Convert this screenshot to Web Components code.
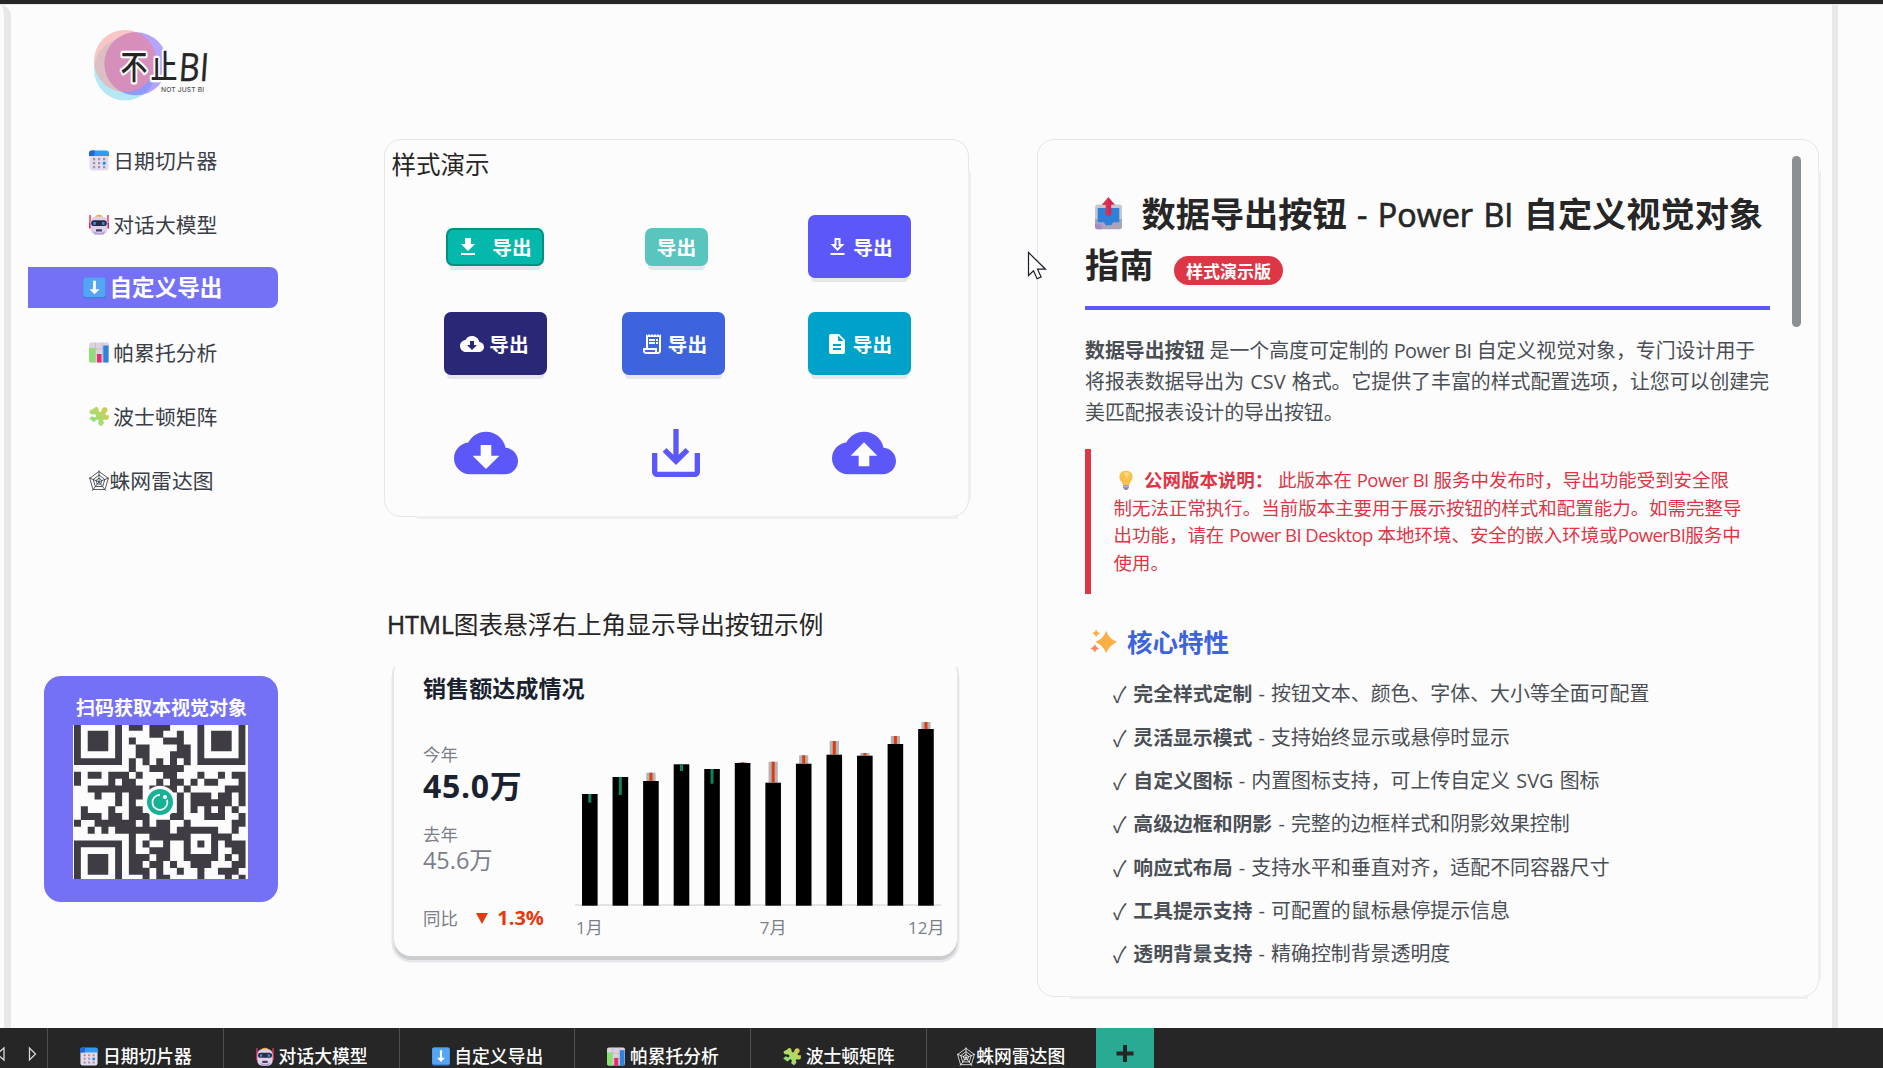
<!DOCTYPE html>
<html lang="zh-CN">
<head>
<meta charset="utf-8">
<title>自定义导出</title>
<style>
html,body{margin:0;height:100%;background:#262626;overflow:hidden}
body{font-family:"Open Sans","Noto Sans CJK SC",sans-serif;color:#262626}
</style>
</head>
<body>
<report-app></report-app>
<script>
const define=(name,html,setup)=>customElements.define(name,class extends HTMLElement{
  connectedCallback(){
    if(this.shadowRoot)return;
    const root=this.attachShadow({mode:'open'});
    root.innerHTML=typeof html==='function'?html(this):html;
    if(setup)setup(this,root);
  }
});

/* colour pictograms, 20x21 box */
const EMOJI={
calendar:`<rect x=".5" y="2" width="19" height="18.5" rx="2.5" fill="#e4dcee"/><path d="M0 6V3.2Q0 .5 2.7.5H17.3Q20 .5 20 3.2V6z" fill="#2f9bf6"/><path d="M0 6V3.2Q0 .5 2.7.5H6L5 6z" fill="#2463d8"/><g fill="#9d96a6"><path d="M4 8h2.2v2.2H4zM9 8h2.2v2.2H9zM14 8h2.2v2.2H14zM4 12h2.2v2.2H4zM9 12h2.2v2.2H9zM4 16h2.2v2.2H4zM9 16h2.2v2.2H9zM14 16h2.2v2.2H14z"/></g><rect x="13.8" y="11.8" width="2.8" height="2.8" fill="#1f86f0"/>`,
robot:`<path d="M.3 1h1.5v13H.3zM18.2 1h1.5v13h-1.5z" fill="#e5355e"/><path d="M0 9h2.500v5.500H0zM17.500 9H20v5.500h-2.500z" fill="#c42a68"/><path d="M6 3.5Q6.500.8 10 .8t4 2.7z" fill="#f4a825"/><rect x="1.5" y="2.500" width="17" height="18.2" rx="5.5" fill="#e0d0e8"/><path d="M4 17q6 4 12.500 0l-2 3.500H6z" fill="#b79be0"/><rect x="2.2" y="6.300" width="15.600" height="5.700" rx="2.800" fill="#2c2b45"/><path d="M4.300 8h2.600v2.700H4.300zM13 8h2.600v2.700H13z" fill="#2196f3"/><rect x="7" y="15.300" width="6" height="2.300" rx=".5" fill="#46405a"/>`,
down:`<rect x="0" y=".5" width="20" height="20" rx="2.200" fill="#3e7fd9"/><rect x=".3" y=".5" width="19.200" height="18.500" rx="2" fill="#55a5f5"/><path d="M8.800 3.500h2.400v8.300h3.200L10 16.500 5.600 11.800h3.200z" fill="#fff"/>`,
bars:`<rect x="0" y=".5" width="20" height="20" rx="2" fill="#dcd3e0"/><path d="M6.500.5v20M13.500.5v20M0 7h20M0 13h20" stroke="#c3b8ca" stroke-width=".8"/><path d="M0 6h6v14.500H2q-2 0-2-2z" fill="#8be070"/><path d="M8 12h4.500v8.500H8z" fill="#e92b6c"/><path d="M14.300 3.500h5.200v17h-5.200z" fill="#2b83dd"/>`,
puzzle:`<defs><linearGradient id="g" x1="1" y1="0" x2="0" y2="1"><stop offset="0" stop-color="#dcc445"/><stop offset=".55" stop-color="#a9dc6b"/><stop offset="1" stop-color="#6fe289"/></linearGradient></defs><path fill="url(#g)" d="M4.800 2.500 7 .8q2.800.6 2.500 3-.3 1.600 1.200 2.200 1.500 0 1.900-1.500.2-2.900 2.900-3.200 3.200.2 3 3.100-.2 1.800-1.900 2.500-1 1.100.3 2.200 1.600.4 2.600-.6l.5 3q-.6 3-3.200 2.300-1.800-.7-2.600.3-.5 1.500 1 2.700l-2.800 3.500-3-2q-.7-1 .3-2.400.6-2-1.300-2.400-1.800.2-2.200 1.800l-1.500.7L.3 12.600l2.200-2q1.500-.6 2.500.6 1.900.6 2.200-1.200 0-1.500-1.700-1.700Q1.200 8.800.6 6.400.3 4 3 3.500q1 0 1.800-1z"/>`,
web:`<g fill="none" stroke="currentColor" stroke-width=".85"><path d="M10 1.500 19.300 8.300 16 19.500H4L.7 8.300z"/><path d="M10 5 15.800 9.500 13.700 16.500H6.300L4.200 9.500z"/><path d="M10 8.200 12.900 10.400 11.800 14H8.200L7.100 10.400z"/><path d="M10 11.800V.3M10 11.800 20 7.800M10 11.800 16.800 20.800M10 11.800 3.200 20.800M10 11.800 0 7.800"/></g>`,
outbox:`<rect x="0" y="4.800" width="20" height="13" rx="2" fill="#c9c6cf"/><path d="M0 14h20v5q0 1.500-1.500 1.500h-17Q0 20.500 0 19z" fill="#aba3b8"/><path d="M0 17.300h5v3.200H1.500Q0 20.500 0 19z" fill="#a58ac8"/><path d="M2 7h16v9h-4.500l-1.500 2h-4l-1.500-2H2z" fill="#2f80d8"/><path d="M10 .2 14.800 5H12v6.800H8V5H5.200z" fill="#cf2756"/><path d="M10 .2V11.800H8V5H5.200z" fill="#e0314a"/>`,
bulb:`<path d="M10 .8q6.500.3 6.700 6.700-.2 3-2.300 5-1.100 1.500-1.200 3.500H6.800q-.1-2-1.200-3.500-2.100-2-2.300-5Q3.500 1.100 10 .8z" fill="#fbbf4d"/><path d="M8 3q3-1.500 5.500 1l-3 5z" fill="#ffe08a"/><path d="M7 16h6v2.700l-2 2.200H9l-2-2.200z" fill="#8f86a8"/><path d="M7 17.600h6" stroke="#c9c2d6"/>`,
sparkles:`<g fill="#fbaf45"><path d="M12.500 2q2 6.400 7.500 9-5.500 2.600-7.500 9-2-6.400-7.500-9 5.500-2.600 7.500-9z" transform="translate(-1.500 -.5) scale(1.080)"/><path d="M4.500 0q.6 3.200 3.500 3.800-2.900.6-3.500 3.700Q4 4.400 1.200 3.800 4 3.200 4.500 0z"/><path d="M3.600 13q.6 3.300 3.400 4-2.800.6-3.400 4-.6-3.400-3.600-4 3-.7 3.600-4z" fill="#f58a5c"/></g>`
};
define('pict-icon',el=>`<style>:host{display:block;flex:none;width:20px;height:21px}svg{display:block;width:100%;height:100%}</style><svg viewBox="0 0 20 21" preserveAspectRatio="none">${EMOJI[el.getAttribute('name')]}</svg>`);

/* single-colour glyphs on a 24 unit grid */
const CLOUD='M19.350 10.040C18.670 6.590 15.640 4 12 4 9.110 4 6.600 5.640 5.350 8.040 2.340 8.360 0 10.910 0 14c0 3.310 2.690 6 6 6h13c2.760 0 5-2.240 5-5 0-2.640-2.050-4.780-4.650-4.960z';
const GLYPH={
get:'M19 9h-4V3H9v6H5l7 7 7-7zM5 18v2h14v-2H5z',
getline:'M19 9h-4V3H9v6H5l7 7 7-7zm-8 2V5h2v6h1.170L12 13.170 9.830 11H11zm-6 7h14v2H5z',
cloud:CLOUD+'M17 13l-5 5-5-5h3V9h4v4z',
up:CLOUD+'M14 13v4h-4v-4H7l5-5 5 5z',
receipt:'M19.500 3.500 18 2l-1.500 1.500L15 2l-1.500 1.500L12 2l-1.500 1.500L9 2 7.500 3.500 6 2v14H3v3c0 1.660 1.340 3 3 3h12c1.660 0 3-1.340 3-3V2zM15 20H6c-.55 0-1-.45-1-1v-1h10zm4-1c0 .55-.45 1-1 1s-1-.45-1-1v-3H8V5h11zM9 7h6v2H9zM16 7h2v2h-2zM9 10h6v2H9zM16 10h2v2h-2z',
file:'M14 2H6c-1.100 0-2 .9-2 2v16c0 1.100.9 2 2 2h12c1.100 0 2-.9 2-2V8zm2 16H8v-2h8zm0-4H8v-2h8zm-3-5V3.500L18.500 9z',
save:'M19 12v7H5v-7H3v7c0 1.100.9 2 2 2h14c1.100 0 2-.9 2-2v-7zm-6 .670 2.590-2.580L17 11.500l-5 5-5-5 1.410-1.410L11 12.670V3h2z'
};
define('line-glyph',el=>`<style>:host{display:block;flex:none;width:24px;height:24px}svg{display:block;width:100%;height:100%;fill:currentColor}</style><svg viewBox="0 0 24 24"><path fill-rule="evenodd" d="${GLYPH[el.getAttribute('name')]}"/></svg>`);

define('brand-logo',`<style>:host{display:block;width:140px;height:84px}svg{display:block;overflow:visible}text{font-family:"Noto Sans CJK SC",sans-serif}</style>
<svg width="140" height="84" viewBox="90 24 140 84">
<circle cx="125" cy="69.500" r="31" fill="#b3e8f4"/><circle cx="125" cy="61" r="31" fill="#f6a5a5" opacity=".62"/><circle cx="136" cy="63.800" r="31.500" fill="#6b4bff" opacity=".5"/>
<clipPath id="c"><circle cx="136" cy="63.800" r="31.500"/></clipPath><circle cx="125" cy="61" r="31" fill="#ee92a8" opacity=".68" clip-path="url(#c)"/>
<g fill="#262626" stroke="#fff" stroke-width="3.600" stroke-linejoin="round" paint-order="stroke">
<text x="0" y="0" font-size="27" font-weight="500" transform="translate(120.500 78.500) scale(1 1.220)">不</text>
<text x="0" y="0" font-size="27" font-weight="500" transform="translate(150.500 78.500) scale(1 1.220)">止</text></g>
<text x="0" y="0" fill="#262626" stroke="#262626" stroke-width=".4" stroke-linejoin="round" style="font-family:'Open Sans',sans-serif" font-size="36" transform="translate(178 81) skewX(-4) scale(.9 1.080)">BI</text>
<text x="161" y="92" fill="#555" style="font-family:Inter,sans-serif" font-size="6.700" font-weight="500" textLength="43">NOT JUST BI</text></svg>`);

define('nav-item',`<style>
:host{display:flex;align-items:center;height:64px;padding-left:78px;font:400 20.800px/30px "Noto Sans CJK SC",sans-serif;color:#3a3e48;box-sizing:border-box}
:host([tight]) .r{gap:.5px}
.r{display:flex;align-items:center;gap:4.300px;white-space:nowrap}
:host([active]){padding-left:17px;font-size:22.600px;font-weight:700;color:#fff}
:host([active]) .r{box-sizing:border-box;width:250px;height:41px;margin-top:-2px;padding-left:55px;gap:3.500px;background:#7571f7;border-radius:0 8px 8px 0}
:host([active]) pict-icon{width:23px;height:22px;margin-top:2px}
</style><div class="r"><pict-icon></pict-icon><slot></slot></div>`,(el,r)=>{
 const n=document.createElement('pict-icon');n.setAttribute('name',el.getAttribute('icon'));r.querySelector('pict-icon').replaceWith(n);
});

const QR={
1:[8,9,11,12,13],2:[11,12,15],3:[8,13,14,15],4:[9,10,15,16],5:[9,10,14,15,16],6:[8,10,12,14,16],7:[8,11,12,13,14,15],
8:[0,2,3,5,6,7,9,13,14,18,21,23,24],9:[0,5,7,8,12,14,15,17,19,20,24],10:[2,3,4,5,6,7,8,9,11,12,13,14,16,22,23,24],
11:[3,6,8,9,15,17,18,19,21,22,24],12:[6,8,15,17,18,19,20,21,22,24],13:[1,5,8,9,15,17,19,21,23],14:[1,2,3,5,6,8,9,10,14,15,19,20,21,24],
15:[0,3,4,5,6,7,8,10,12,13,16,23,24],16:[2,4,6,7,8,9,10,11,12,13,15,16,17,18,19,20,23],17:[8,11,12,13,14,15,16,20,21,22],
18:[8,10,13,16,18,20,22,23,24],19:[8,11,12,13,16,20,23,24],20:[8,9,10,12,13,16,17,18,19,20,22,24],21:[8,9,11,12,14,17,18,19,23,24],
22:[8,9,10,12,15,18,21,22,23],23:[10,12,13,18,22,24]};
define('qr-card',()=>{
 let d='';for(const r in QR)for(const c of QR[r])d+=`M${c} ${r}h1.020v1.020h-1.020z`;
 const f=(x,y)=>`<path d="M${x} ${y}h7v7h-7zm1 1v5h5v-5zM${x+2} ${y+2}h3v3h-3z" fill-rule="evenodd"/>`;
 return `<style>:host{display:flex;flex-direction:column;align-items:center;box-sizing:border-box;width:234px;height:225.500px;padding-top:16px;background:#7571f7;border-radius:17px;color:#fff;font:700 19px/30px "Noto Sans CJK SC",sans-serif}span{padding-left:1px}svg{display:block;margin-top:3px;margin-right:1px}</style>
 <span><slot></slot></span><svg width="175" height="154" viewBox="0 0 175 154"><rect width="175" height="154" fill="#fcfcfc"/><g transform="translate(1 -8) scale(6.856)" fill="#403c44">${f(0,0)}${f(18,0)}${f(0,18)}<path d="${d}"/></g>
 <circle cx="87" cy="77" r="16.300" fill="#fff"/><circle cx="87" cy="77" r="13" fill="#17b296"/><path d="M87 69.800a7.500 7.500 0 1 0 7 5" fill="none" stroke="#fff" stroke-width="1.700"/><circle cx="92" cy="72" r="2" fill="#fff"/></svg>`});

define('export-button',el=>`<style>:host{display:flex;flex:none;position:relative;align-items:center;justify-content:center;box-sizing:border-box;width:var(--w,103px);height:var(--h,63px);border-radius:7px;background:var(--bg);border:var(--b,0);box-shadow:0 7px 0 -3px #e6e7ea;color:#fff;font:700 19.700px/30px "Noto Sans CJK SC",sans-serif}
 .r{display:flex;align-items:center;gap:var(--gap,5px);transform:translateX(var(--dx,0px))}</style><div class="r">${el.hasAttribute('glyph')?`<line-glyph name="${el.getAttribute('glyph')}"></line-glyph>`:''}<span><slot></slot></span></div>`);

define('soft-panel',`<style>:host{display:block;box-sizing:border-box;border:1px solid #e5e6e8;border-radius:17px;background:#fcfcfc;position:relative}
 :host::before,:host::after{content:"";position:absolute;background:#eeeff1}
 :host::before{left:100%;top:31px;bottom:16px;width:3px}
 :host::after{top:100%;left:32px;right:10px;height:3px}</style><slot></slot>`);

define('style-demo',`<style>:host{display:block;margin-left:-1px}
 soft-panel{width:585px;height:378px}
 h2{margin:0;padding:6px 0 1px 6.500px;font:400 24.500px/36px "Noto Sans CJK SC",sans-serif;color:#262626}
 .row{display:flex;align-items:center}
 .a{margin-top:32px;height:63px;padding-left:61px}.a>:nth-child(2){margin-left:101px}.a>:nth-child(3){margin-left:100px}
 .b{margin-top:34px;height:63px;padding-left:59px}.b>:nth-child(2){margin-left:75px}.b>:nth-child(3){margin-left:83px}
 .c{margin-top:46px;padding-left:69px;color:#5b57f9}.c line-glyph{width:64px;height:64px}.c>:nth-child(2){margin-left:126px}.c>:nth-child(3){margin-left:123.500px}
 </style><soft-panel><h2>样式演示</h2>
 <div class="row a"><export-button glyph="get" style="--w:98px;--h:38px;--bg:#04b8ab;--b:2.500px solid #00917f;--gap:12px;--dx:-1px">导出</export-button>
 <export-button style="--w:63px;--h:38px;--bg:#5ac5bf">导出</export-button>
 <export-button glyph="getline" style="--bg:#5b57f9;--gap:4px;--dx:-.5px">导出</export-button></div>
 <div class="row b"><export-button glyph="cloud" style="--bg:#2a2876;--dx:-1px">导出</export-button><export-button glyph="receipt" style="--bg:#3d63dd;--gap:4px">导出</export-button><export-button glyph="file" style="--bg:#00a2ca;--gap:4px;--dx:-1px">导出</export-button></div>
 <div class="row c"><line-glyph name="cloud"></line-glyph><line-glyph name="save"></line-glyph><line-glyph name="up"></line-glyph></div></soft-panel>`);

define('sales-chart',()=>{
 const top=[794,777,781,764.300,769,763,782.700,763.700,754.700,755.700,744,729];
 const last=[802.700,795,772.700,771,783.700,762.300,761.700,755.300,741,753,736,722];
 let s='';top.forEach((t,i)=>{const x=589.800+i*30.560,l=last[i];
  if(l<t)s+=`<rect x="${x-4.600}" y="${l}" width="9.200" height="${t-l}" fill="#b3b3b3"/>`;
  s+=`<rect x="${x-7.800}" y="${t}" width="15.600" height="${905.700-t}" fill="#000"/>`;
  s+=`<rect x="${x-1.500}" y="${Math.min(t,l)}" width="3" height="${Math.abs(t-l)}" fill="${l<t?'#e23a0e':'#0b8457'}"/>`});
 return `<style>:host{display:block;color:#7a7f89;font:400 17px/24px "Open Sans","Noto Sans CJK SC",sans-serif}svg{display:block}.x{display:flex;padding-left:1px;margin-top:6px}.x :nth-child(2){margin-left:157px}.x :nth-child(3){margin-left:121.500px}</style>
 <svg width="370" height="190" viewBox="575 720 370 190"><rect x="575" y="904" width="366" height="2" fill="#e4e4e6"/>${s}</svg><div class="x"><span>1月</span><span>7月</span><span>12月</span></div>`});

define('sales-card',`<style>:host{display:block;width:569px;height:297px;overflow:hidden}
 .card{box-sizing:border-box;width:563px;height:299px;margin:-10px 0 0 3px;padding:13px 0 0 29px;border-radius:17px;background:#fcfcfc;box-shadow:0 4px 0 0 #cbcdcf,0 4px 0 2.500px #e6e7ea,0 0 0 2px #e9eaec}
 h3{margin:0;font:700 23.100px/34px "Noto Sans CJK SC",sans-serif;color:#1a2230}
 .body{display:flex;margin-top:16px}.kpi{width:152px;padding-top:21px;color:#7a7f89;white-space:nowrap}
 .l{font:400 17.400px/26px "Noto Sans CJK SC",sans-serif}
 .big{font:700 32px/38px "Open Sans","Noto Sans CJK SC",sans-serif;letter-spacing:.7px;color:#1a2230;margin-top:-.5px}
 .mid{font:400 23.400px/28px "Open Sans","Noto Sans CJK SC",sans-serif;margin-top:-.5px}
 .yoy{display:flex;align-items:center;margin-top:31px}.yoy i{width:0;height:0;border:6px solid transparent;border-top:11px solid #e23a0e;border-bottom:0;margin:0 9.500px 0 18px}
 .yoy b{font:700 20px/26px "Open Sans",sans-serif;color:#e23a0e}
 </style><div class="card"><h3>销售额达成情况</h3><div class="body"><div class="kpi"><div class="l">今年</div><div class="big">45.0万</div><div class="l" style="margin-top:16px">去年</div><div class="mid">45.6万</div><div class="yoy"><span class="l">同比</span><i></i><b>1.3%</b></div></div><sales-chart></sales-chart></div></div>`);

define('feature-item',`<style>:host{display:flex;align-items:center;height:43.350px;font-size:19.920px;line-height:30px;white-space:pre;color:#4a4f55}
 .k{width:20.300px;font-size:19.800px;font-family:"Noto Sans CJK SC",sans-serif}.k span{display:inline-block;transform:scaleY(1.120)}.d{word-spacing:1px}::slotted(b){font-size:19.850px;word-spacing:0}</style><span class="k"><span>✓</span></span><span class="d"><slot></slot></span>`);

define('guide-doc',`<style>:host{display:block}
 soft-panel{width:782px;height:858px}
 .in{display:flex;padding:0 0 0 47px}
 .doc{width:685px;white-space:pre}
 h1{margin:0;padding:48px 0 16px;font-size:34.200px;line-height:51px;font-weight:600;color:#262626;border-bottom:4px solid #5b57f9}
 h1 .n{font-weight:400;font-size:32.300px;-webkit-text-stroke:.7px #262626;word-spacing:2px}
 h1 div{display:flex;align-items:center;height:51px}h1 .l1{padding-left:10px}
 h1 b{font-weight:700}
 h1 pict-icon{width:27px;height:33px;margin-right:19.500px}
 .badge{margin-left:20.500px;margin-top:11px;width:109px;height:29px;border-radius:15px;background:#dc3647;color:#fff;text-align:center;font:700 17px/29px "Noto Sans CJK SC",sans-serif}
 .p{margin:24.500px 0 0;font-size:19.900px;line-height:31.250px;color:#4a4f55}
 .e{letter-spacing:-.55px}.c{word-spacing:1px}
 .note{margin-top:20.500px;box-sizing:border-box;height:145px;border-left:6px solid #dc3647;padding:17px 0 0 22.500px;color:#dc3647;font-size:18.480px;line-height:27.800px}
 .note div{display:flex;align-items:center;height:27.800px}.note pict-icon{width:20px;height:20px;margin:0 8.500px 0 2px}
 h2{display:flex;align-items:center;margin:28px 0 0;height:38px;padding-left:4.500px;font:700 25.500px/38px "Noto Sans CJK SC",sans-serif;color:#3d63dd}h2 pict-icon{width:27px;height:24px;margin-right:10.500px}
 .list{padding:12.800px 0 0 28px}
 .bar{width:9px;height:171px;margin:16px 0 0 22px;border-radius:5px;background:#8c9094}
 </style><soft-panel><div class="in"><div class="doc">
 <h1><div class="l1"><pict-icon name="outbox"></pict-icon><span><b>数据导出按钮</b><span class="n"> - Power BI </span><b>自定义视觉对象</b></span></div><div><b>指南</b><span class="badge">样式演示版</span></div></h1>
 <section class="p"><div><b>数据导出按钮</b> 是一个高度可定制的 <span class="e">Power BI</span> 自定义视觉对象，专门设计用于</div><div class="c">将报表数据导出为 CSV 格式。它提供了丰富的样式配置选项，让您可以创建完</div><div>美匹配报表设计的导出按钮。</div></section><section class="note"><div><pict-icon name="bulb"></pict-icon><span><b>公网版本说明：</b> 此版本在 <span class="e">Power BI</span> 服务中发布时，导出功能受到安全限</span></div><div>制无法正常执行。当前版本主要用于展示按钮的样式和配置能力。如需完整导</div><div><span>出功能，请在 <span class="e">Power BI Desktop</span> 本地环境、安全的嵌入环境或<span class="e">PowerBI</span>服务中</span></div><div>使用。</div></section><h2><pict-icon name="sparkles"></pict-icon>核心特性</h2><div class="list"><feature-item><b>完全样式定制</b> - 按钮文本、颜色、字体、大小等全面可配置</feature-item><feature-item><b>灵活显示模式</b> - 支持始终显示或悬停时显示</feature-item><feature-item><b>自定义图标</b> - 内置图标支持，可上传自定义 SVG 图标</feature-item><feature-item><b>高级边框和阴影</b> - 完整的边框样式和阴影效果控制</feature-item><feature-item><b>响应式布局</b> - 支持水平和垂直对齐，适配不同容器尺寸</feature-item><feature-item><b>工具提示支持</b> - 可配置的鼠标悬停提示信息</feature-item><feature-item><b>透明背景支持</b> - 精确控制背景透明度</feature-item></div>
 </div><div class="bar"></div></div></soft-panel>`.replace(/>\n\s*</g,'><'));

define('page-tab',el=>`<style>:host{display:flex;box-sizing:border-box;justify-content:center;width:var(--w,175.700px);height:40px;padding-top:13px;border-left:1px solid #4b4e56;gap:4.500px;color:#fff;font:500 17.800px/28px "Noto Sans CJK SC",sans-serif;white-space:nowrap}:host(:not([tight])){padding-left:1px}:host([tight]){gap:1px}pict-icon{width:18px;height:19px;margin-top:5.500px}</style><pict-icon name="${el.getAttribute('icon')}"></pict-icon><slot></slot>`);

define('page-tabs',`<style>:host{display:flex;height:40px;background:#262626;overflow:hidden}
 .nav{width:47.300px;flex:none;display:flex}svg{display:block}
 .add{display:flex;justify-content:center;width:58.500px;height:40px;background:#29ab93}</style>
 <div class="nav"><svg width="47" height="40" fill="none" stroke="#d8d8d8" stroke-width="1.300"><path d="M4 20v12l-7-6zM29.500 20v12l6-6z"/></svg></div>
 <page-tab icon="calendar">日期切片器</page-tab><page-tab icon="robot">对话大模型</page-tab><page-tab icon="down">自定义导出</page-tab><page-tab icon="bars">帕累托分析</page-tab><page-tab icon="puzzle">波士顿矩阵</page-tab><page-tab icon="web" tight style="--w:170px">蛛网雷达图</page-tab>
 <div class="add"><svg width="18" height="40"><path d="M9 17v17M.5 25.500h17" stroke="#262626" stroke-width="4"/></svg></div>`);

define('report-app',`<style>:host{display:flex;flex-direction:column;width:1883px;height:1068px;background:#262626;position:relative}
 .stage{display:flex;height:1024px;margin-top:4px;background:#fcfcfc;box-sizing:border-box;border-top:1.500px solid #e6e7e9}
 .edge{width:4px;background:#fcfcfc;border-right:7px solid #e6e8ea;border-top-right-radius:12px;flex:none}
 .edge.r{width:44px;border-right:0;border-left:6.500px solid #e6e8ea;border-radius:0}
 aside{width:374px;flex:none}
 brand-logo{margin:19px 0 0 79px}
 nav{margin-top:20px}
 qr-card{margin:164px 0 0 33px}
 main{width:652px;flex:none;padding-top:134px}
 .h{margin:90px 0 0 2px;font-size:24.650px;line-height:36px;white-space:nowrap}
 .h span{-webkit-text-stroke:.5px #262626}
 sales-card{margin:24px 0 0 6px}
 guide-doc{width:795px;flex:none;padding-top:134px;box-sizing:border-box}
 .cur{position:absolute;left:1027px;top:251px}
 </style>
 <div class="stage"><div class="edge"></div>
 <aside><brand-logo></brand-logo><nav><nav-item icon="calendar">日期切片器</nav-item><nav-item icon="robot">对话大模型</nav-item><nav-item icon="down" active>自定义导出</nav-item><nav-item icon="bars">帕累托分析</nav-item><nav-item icon="puzzle">波士顿矩阵</nav-item><nav-item icon="web" tight>蛛网雷达图</nav-item></nav><qr-card>扫码获取本视觉对象</qr-card></aside>
 <main><style-demo></style-demo><div class="h"><span>HTML</span>图表悬浮右上角显示导出按钮示例</div><sales-card></sales-card></main>
 <guide-doc></guide-doc><div class="edge r"></div></div>
 <page-tabs></page-tabs>
 <svg class="cur" width="20" height="29" viewBox="0 0 20 29"><path d="M1.500 1.500v23l5-4.800 3.600 8 4-1.800-3.600-7.700h8z" fill="#fff" stroke="#1b1b2b" stroke-width="1.200"/></svg>`);
</script>
</body>
</html>
